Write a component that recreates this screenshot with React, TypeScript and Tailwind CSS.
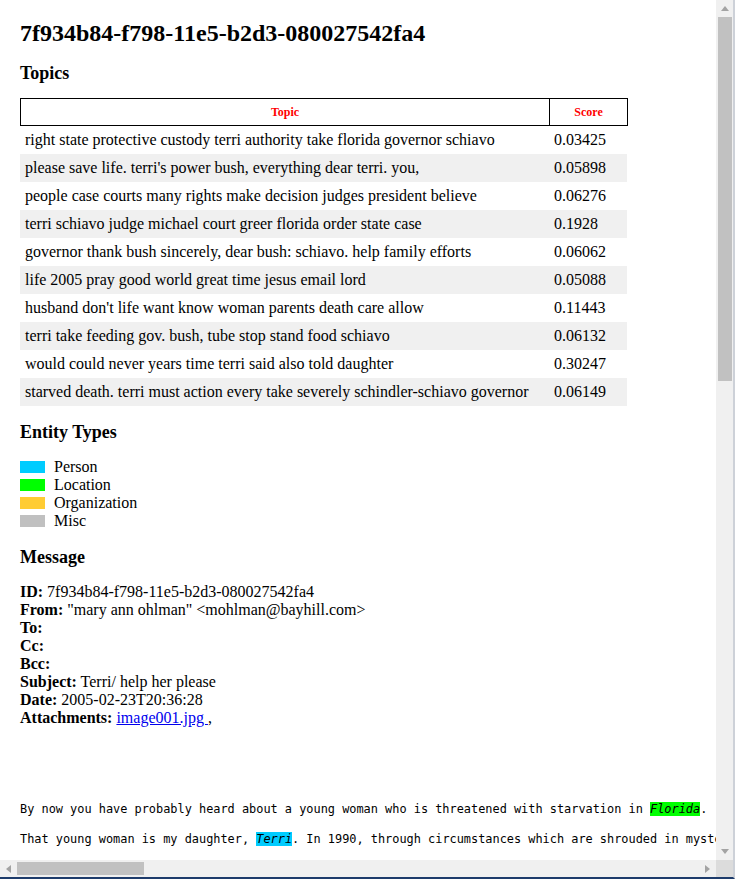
import React from 'react'

type TopicRow = { words: string; score: string }

const topics: TopicRow[] = [
  { words: 'right state protective custody terri authority take florida governor schiavo', score: '0.03425' },
  { words: "please save life. terri's power bush, everything dear terri. you,", score: '0.05898' },
  { words: 'people case courts many rights make decision judges president believe', score: '0.06276' },
  { words: 'terri schiavo judge michael court greer florida order state case', score: '0.1928' },
  { words: 'governor thank bush sincerely, dear bush: schiavo. help family efforts', score: '0.06062' },
  { words: 'life 2005 pray good world great time jesus email lord', score: '0.05088' },
  { words: "husband don't life want know woman parents death care allow", score: '0.11443' },
  { words: 'terri take feeding gov. bush, tube stop stand food schiavo', score: '0.06132' },
  { words: 'would could never years time terri said also told daughter', score: '0.30247' },
  { words: 'starved death. terri must action every take severely schindler-schiavo governor', score: '0.06149' },
]

const entityTypes = [
  { name: 'Person', color: 'bg-[#00ccff]' },
  { name: 'Location', color: 'bg-[#00ff00]' },
  { name: 'Organization', color: 'bg-[#ffcc33]' },
  { name: 'Misc', color: 'bg-[#c0c0c0]' },
]

// little grey scrollbar arrows
function Arrow({ dir }: { dir: 'up' | 'down' | 'left' | 'right' }) {
  const pts = {
    up: '0,6 8,6 4,1',
    down: '0,1 8,1 4,6',
    left: '6,0 6,8 1,4',
    right: '1,0 1,8 6,4',
  }[dir]
  const size = dir === 'up' || dir === 'down' ? { w: 8, h: 7 } : { w: 7, h: 8 }
  return (
    <svg width={size.w} height={size.h} viewBox={`0 0 ${size.w} ${size.h}`}>
      <polygon points={pts} fill="#a3a3a3" />
    </svg>
  )
}

export default function App() {
  return (
    <div className="w-[735px] h-[879px] flex flex-col bg-white border-r-2 border-r-[#cdd1d8] border-b-2 border-b-[#1d3b6b] overflow-hidden">
      <div className="flex flex-1 min-h-0">
        {/* page content */}
        <div
          className="w-[716px] h-full overflow-hidden pl-5 text-black"
          style={{ fontFamily: '"Liberation Serif", "Times New Roman", serif' }}
        >
          <h1 className="pt-[19px] text-[24px] leading-[28px] font-bold">7f934b84-f798-11e5-b2d3-080027542fa4</h1>

          <h3 className="mt-[16px] text-[18px] leading-[21px] font-bold">Topics</h3>

          {/* topics table */}
          <div className="mt-[14px] w-[608px]">
            <div className="flex h-[28px] border border-black text-[12px] font-bold text-[#ff0000]">
              <div className="w-[529px] border-r border-black flex items-center justify-center">Topic</div>
              <div className="flex-1 flex items-center justify-center">Score</div>
            </div>
            {topics.map((t, i) => (
              <div
                key={i}
                className={`flex h-[28px] w-[607px] items-center text-[16px] whitespace-nowrap ${i % 2 === 1 ? 'bg-[#f0f0f0]' : 'bg-white'}`}
              >
                <div className="w-[529px] pl-[5px]">{t.words}</div>
                <div className="pl-[5px]">{t.score}</div>
              </div>
            ))}
          </div>

          <h3 className="mt-[16px] text-[18px] leading-[21px] font-bold">Entity Types</h3>

          <div className="mt-[15px] text-[16px] leading-[18px]">
            {entityTypes.map((e) => (
              <div key={e.name} className="flex items-center h-[18px]">
                <span className={`inline-block w-[25px] h-[12px] mr-[9px] ${e.color}`}></span>
                <span>{e.name}</span>
              </div>
            ))}
          </div>

          <h3 className="mt-[17px] text-[18px] leading-[21px] font-bold">Message</h3>

          <div className="mt-[15px] text-[16px] leading-[18px]">
            <div><b>ID:</b> 7f934b84-f798-11e5-b2d3-080027542fa4</div>
            <div><b>From:</b> "mary ann ohlman" &lt;mohlman@bayhill.com&gt;</div>
            <div><b>To:</b></div>
            <div><b>Cc:</b></div>
            <div><b>Bcc:</b></div>
            <div><b>Subject:</b> Terri/ help her please</div>
            <div><b>Date:</b> 2005-02-23T20:36:28</div>
            <div>
              <b>Attachments:</b> <a href="#" className="text-[#0000ee] underline">image001.jpg </a>,
            </div>
          </div>

          {/* message body */}
          <div
            className="mt-[75px] text-[11.9px] leading-[15px] whitespace-pre text-black"
            style={{ fontFamily: '"DejaVu Sans Mono", "Liberation Mono", monospace' }}
          >
            <div>
              By now you have probably heard about a young woman who is threatened with starvation in{' '}
              <span className="bg-[#00ff00] italic">Florida</span>.
            </div>
            <div>&nbsp;</div>
            <div>
              That young woman is my daughter, <span className="bg-[#00ccff] italic">Terri</span>. In 1990, through
              circumstances which are shrouded in mystery
            </div>
          </div>
        </div>

        {/* vertical scrollbar */}
        <div className="w-[17px] h-full bg-[#f0f0f0] flex flex-col items-center">
          <div className="h-[17px] flex items-center justify-center">
            <Arrow dir="up" />
          </div>
          <div className="w-[14px] h-[364px] bg-[#c1c1c1]"></div>
          <div className="flex-1"></div>
          <div className="h-[17px] flex items-center justify-center">
            <Arrow dir="down" />
          </div>
        </div>
      </div>

      {/* horizontal scrollbar */}
      <div className="flex h-[17px] shrink-0">
        <div className="w-[716px] bg-[#f0f0f0] flex items-center">
          <div className="w-[17px] flex items-center justify-center">
            <Arrow dir="left" />
          </div>
          <div className="w-[127px] h-[13px] bg-[#c1c1c1]"></div>
          <div className="flex-1"></div>
          <div className="w-[17px] flex items-center justify-center">
            <Arrow dir="right" />
          </div>
        </div>
        <div className="w-[17px] bg-[#dcdcdc]"></div>
      </div>
    </div>
  )
}
